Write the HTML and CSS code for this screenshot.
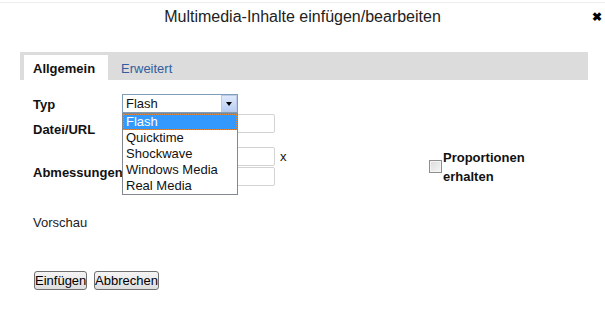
FILE: index.html
```html
<!DOCTYPE html>
<html lang="de">
<head>
    <meta charset="UTF-8">
    <title>Multimedia-Inhalte einfügen/bearbeiten</title>
    <link rel="stylesheet" href="styles.css">
</head>
<body>
    <div class="dialog">
        <!-- Title bar -->
        <div class="titlebar">
            <span></span>
            <span class="title">Multimedia-Inhalte einfügen/bearbeiten</span>
            <span class="close">&#10006;</span>
        </div>

        <!-- Tabs -->
        <div class="tabs">
            <span class="tab active">Allgemein</span>
            <span class="tab">Erweitert</span>
        </div>

        <!-- General panel -->
        <div class="panel">
            <div class="row row-type">
                <label class="field-label">Typ</label>
                <div class="select">
                    <span class="select-value">Flash</span>
                    <span class="select-arrow"></span>
                    <ul class="select-list">
                        <li class="selected">Flash</li>
                        <li>Quicktime</li>
                        <li>Shockwave</li>
                        <li>Windows Media</li>
                        <li>Real Media</li>
                    </ul>
                </div>
            </div>

            <div class="row row-url">
                <label class="field-label url-label">Datei/URL</label>
                <input type="text" class="text-input">
            </div>

            <div class="row row-size">
                <label class="field-label size-label">Abmessungen</label>
                <div class="size-inputs">
                    <div class="size-line">
                        <input type="text" class="text-input">
                        <span class="times">x</span>
                    </div>
                    <input type="text" class="text-input">
                </div>
                <div class="keep">
                    <span class="checkbox"></span>
                    <span class="keep-text">Proportionen erhalten</span>
                </div>
            </div>

            <div class="preview">Vorschau</div>
        </div>

        <!-- Buttons -->
        <div class="buttons">
            <button class="btn btn-insert">Einfügen</button>
            <button class="btn btn-cancel">Abbrechen</button>
        </div>
    </div>
</body>
</html>
```

FILE: styles.css
```css
/* Basic layout */
body {
    margin: 0;
    padding: 0;
    background: #fff;
    font-family: "Liberation Sans", Arial, sans-serif;
    font-size: 13px;
    color: #111;
}
.dialog {
    margin-top: 2px;
    border-top: 1px solid #eeeeee;
    width: 605px;
}
/* Title bar */
.titlebar {
    display: grid;
    grid-template-columns: 1fr auto 1fr;
    height: 28px;
    line-height: 28px;
}
.title {
    font-size: 16px;
    color: #222;
}
.close {
    justify-self: end;
    margin-right: 3px;
    font-size: 12px;
    font-weight: bold;
    color: #000;
}
/* Tabs */
.tabs {
    display: flex;
    align-items: flex-end;
    margin: 21px 0 0 20px;
    width: 564px;
    height: 28px;
    padding-left: 4px;
    background-color: #dcdcdc;
}
.tab {
    height: 23px;
    line-height: 23px;
    padding: 2px 13px 0 13px;
    color: #335e9e;
}
.tab.active {
    width: 75px;
    padding: 2px 0 0 9px;
    background-color: #fff;
    font-weight: bold;
    color: #111;
}
/* Panel */
.panel {
    padding-left: 33px;
}
.row {
    display: flex;
    align-items: flex-start;
}
.field-label {
    width: 89px;
    flex-shrink: 0;
    font-weight: bold;
    line-height: 16px;
}
.row-type {
    margin-top: 14px;
    height: 20px;
}
.row-type .field-label {
    padding-top: 3px;
}
.row-url {
    height: 20px;
}
.url-label {
    padding-top: 8px;
}
.row-size {
    margin-top: 13px;
    height: 39px;
}
.size-label {
    padding-top: 18px;
}
.text-input {
    box-sizing: border-box;
    width: 153px;
    height: 19px;
    margin: 0;
    border: 1px solid #d3d3d3;
    border-radius: 2px;
    background: #fff;
}
.size-inputs {
    display: flex;
    flex-direction: column;
    gap: 1px;
    width: 307px;
}
.size-line {
    display: flex;
    align-items: center;
}
.times {
    margin-left: 5px;
    line-height: 19px;
}
/* Keep proportions */
.keep {
    display: flex;
    align-items: flex-start;
}
.checkbox {
    box-sizing: border-box;
    width: 13px;
    height: 13px;
    margin-top: 13px;
    border: 1px solid #8f8f8f;
    background: linear-gradient(135deg, #dcdcdc, #f6f6f6);
    box-shadow: inset 0 0 0 1px #f4f4f4;
}
.keep-text {
    width: 95px;
    margin-left: 1px;
    padding-top: 1px;
    line-height: 19px;
    font-weight: bold;
}
/* Fake select with open list */
.select {
    position: relative;
    box-sizing: border-box;
    width: 116px;
    height: 19px;
    border: 1px solid #7f9db9;
    background: #fff;
}
.select-value {
    display: block;
    padding-left: 3px;
    line-height: 17px;
}
.select-arrow {
    position: absolute;
    top: 0;
    right: 0;
    box-sizing: border-box;
    width: 16px;
    height: 17px;
    border: 1px solid #b9cbe8;
    background: linear-gradient(#dfe9fb, #b9cdf3);
}
.select-arrow::after {
    content: "";
    position: absolute;
    left: 4px;
    top: 6px;
    border-left: 3px solid transparent;
    border-right: 3px solid transparent;
    border-top: 4px solid #000;
}
.select-list {
    position: absolute;
    top: 18px;
    left: -1px;
    width: 114px;
    margin: 0;
    padding: 0;
    list-style: none;
    border: 1px solid #828790;
    background: #fff;
    z-index: 2;
}
.select-list li {
    box-sizing: border-box;
    height: 16px;
    padding-left: 3px;
    line-height: 16px;
    font-size: 13px;
}
.select-list li.selected {
    background-color: #3399ff;
    color: #fff;
    border: 1px dotted #e0893a;
    padding-left: 2px;
    line-height: 14px;
}
/* Preview */
.preview {
    margin-top: 29px;
    line-height: 16px;
    color: #222;
}
/* Buttons */
.buttons {
    display: flex;
    gap: 7px;
    margin-top: 40px;
    padding-left: 34px;
}
.btn {
    box-sizing: border-box;
    height: 19px;
    padding: 0;
    border: 1px solid #707070;
    border-radius: 3px;
    background: linear-gradient(#f4f4f4, #dedede);
    font-family: "Liberation Sans", Arial, sans-serif;
    font-size: 13px;
    color: #000;
}
.btn-insert {
    width: 53px;
}
.btn-cancel {
    width: 65px;
}
```
